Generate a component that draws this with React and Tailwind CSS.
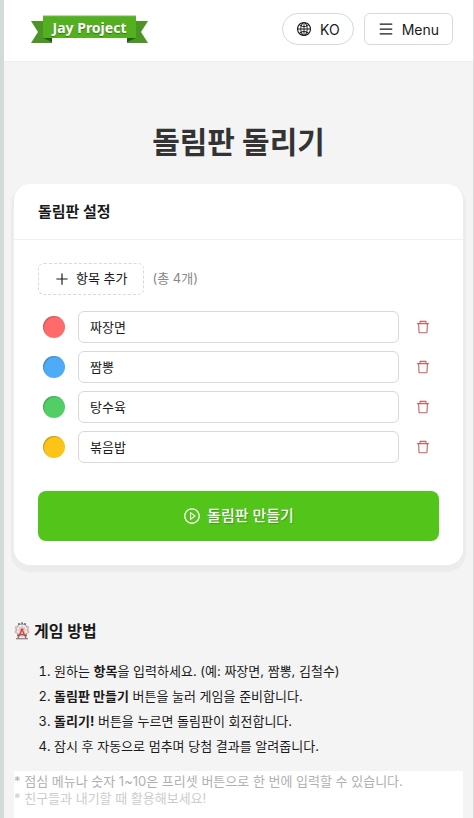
import React, { useState } from "react";
import { AiOutlineDelete, AiOutlineGlobal, AiOutlineMenu, AiOutlinePlayCircle, AiOutlinePlus } from "react-icons/ai";

const INITIAL_ITEMS = [
  { id: 1, name: "짜장면", color: "#ff6b6b" },
  { id: 2, name: "짬뽕", color: "#4dabf7" },
  { id: 3, name: "탕수육", color: "#51cf66" },
  { id: 4, name: "볶음밥", color: "#fcc419" },
];

const NEW_COLORS = ["#845ef7", "#ff922b", "#20c997", "#f06595"];

const Logo = () => (
  <svg width="118" height="29" viewBox="0 0 118 29" role="img" aria-label="Jay Project">
    <path d="M0 6H21V28H0L7 17Z" fill="#4c9425" />
    <path d="M117 6H96V28H117L110 17Z" fill="#4c9425" />
    <path d="M12 23H21V27Z" fill="#1f5d10" />
    <path d="M105 23H96V27Z" fill="#1f5d10" />
    <rect x="12" y="1" width="93" height="22" fill="#54b020" />
    <path d="M12 1H105" stroke="#74bd4c" strokeWidth="1" />
    <text
      x="58.5"
      y="18"
      textAnchor="middle"
      fill="#ffffff"
      className="font-['Noto_Sans'] text-[14px] font-bold [text-shadow:0_1px_1px_rgba(0,0,0,0.35)]"
    >
      Jay Project
    </text>
  </svg>
);

const FerrisWheel = () => (
  <svg width="16" height="18" viewBox="0 0 16 18" fill="none" aria-hidden="true">
    <circle cx="8" cy="8" r="6" stroke="#8d9296" strokeWidth="1" />
    <circle cx="8" cy="8" r="3.2" stroke="#e3a9a9" strokeWidth="0.7" />
    <path d="M8 2V14M2 8H14M3.8 3.8L12.2 12.2M12.2 3.8L3.8 12.2" stroke="#c3b1b3" strokeWidth="0.6" />
    <g fill="#e9b4b4">
      <circle cx="2.2" cy="5.4" r="1.4" />
      <circle cx="13.8" cy="5.4" r="1.4" />
      <circle cx="1.9" cy="10" r="1.4" />
      <circle cx="14.1" cy="10" r="1.4" />
    </g>
    <g fill="#6d7378">
      <circle cx="5" cy="2" r="1.1" />
      <circle cx="11" cy="2" r="1.1" />
      <circle cx="8" cy="1.3" r="1" />
      <circle cx="4" cy="13.4" r="1.1" />
      <circle cx="12" cy="13.4" r="1.1" />
    </g>
    <path d="M8 7.5L4 16M8 7.5L12 16M5.8 12.4H10.2" stroke="#d4413f" strokeWidth="1.3" />
    <circle cx="8" cy="7.8" r="1.5" fill="#d4413f" />
    <path d="M2 16.7H14" stroke="#777c80" strokeWidth="1.2" />
  </svg>
);

const Header = () => (
  <header className="flex items-start justify-between border-b border-[#eeeeee] bg-white pt-[13px] pr-5 pb-4 pl-[27px]">
    <a href="#home" className="pt-[2px]">
      <Logo />
    </a>
    <div className="flex gap-[10px]">
      <button type="button" className="flex h-8 items-center gap-2 rounded-full border border-[#d9d9d9] px-[13px] text-[14px]">
        <AiOutlineGlobal size={16} />
        KO
      </button>
      <button type="button" className="flex h-8 items-center gap-2 rounded-md border border-[#d9d9d9] px-[13px] text-[14px]">
        <AiOutlineMenu size={16} />
        Menu
      </button>
    </div>
  </header>
);

const ItemRow = ({ item, onChange, onRemove }) => (
  <li className="flex items-center gap-2">
    <div className="flex w-8 shrink-0 justify-center">
      <span
        className="size-[22px] rounded-full shadow-[inset_1px_1px_1px_rgba(0,0,0,0.2)]"
        style={{ backgroundColor: item.color }}
      />
    </div>
    <input
      type="text"
      aria-label="항목 이름"
      value={item.name}
      onChange={(e) => onChange(item.id, e.target.value)}
      className="h-8 min-w-0 flex-1 rounded-md border border-[#d9d9d9] px-[11px] pb-[2px] text-[13px] outline-none focus:border-[#52c41a]"
    />
    <button
      type="button"
      aria-label="항목 삭제"
      onClick={() => onRemove(item.id)}
      className="flex size-8 shrink-0 items-center justify-center text-[#cf6060]"
    >
      <AiOutlineDelete size={16} />
    </button>
  </li>
);

const RouletteSettings = () => {
  const [items, setItems] = useState(INITIAL_ITEMS);

  const handleAdd = () => {
    setItems((prev) => [...prev, { id: Date.now(), name: "", color: NEW_COLORS[prev.length % NEW_COLORS.length] }]);
  };

  const handleChange = (id, name) => {
    setItems((prev) => prev.map((item) => (item.id === id ? { ...item, name } : item)));
  };

  const handleRemove = (id) => {
    setItems((prev) => prev.filter((item) => item.id !== id));
  };

  return (
    <section className="rounded-2xl bg-white shadow-[0_4px_1px_3px_#ececec]">
      <h2 className="border-b border-[#f0f0f0] px-6 py-4 text-[15px] leading-[23px] font-bold">돌림판 설정</h2>
      <div className="px-6 pt-[23px] pb-6">
        <div className="flex items-center gap-[9px]">
          <button
            type="button"
            onClick={handleAdd}
            className="flex h-8 items-center gap-[6px] rounded-md border border-dashed border-[#d9d9d9] px-[15px] text-[13px]"
          >
            <AiOutlinePlus size={16} />
            항목 추가
          </button>
          <span className="text-[13px] text-[#888888]">(총 {items.length}개)</span>
        </div>
        <ul className="mt-4 flex flex-col gap-2">
          {items.map((item) => (
            <ItemRow key={item.id} item={item} onChange={handleChange} onRemove={handleRemove} />
          ))}
        </ul>
        <button
          type="button"
          className="mt-7 flex h-[50px] w-full items-center justify-center gap-[6px] rounded-lg bg-[#52c41a] text-[15px] font-medium text-white [text-shadow:1px_1px_1px_rgba(0,0,0,0.2)]"
        >
          <AiOutlinePlayCircle size={18} />
          돌림판 만들기
        </button>
      </div>
    </section>
  );
};

const HowToPlay = () => (
  <section className="mt-[54px]">
    <h3 className="flex items-center gap-1 text-[16px] leading-6 font-bold">
      <FerrisWheel />
      게임 방법
    </h3>
    <ol className="mt-4 list-decimal pl-10 text-[13px] leading-[25px]">
      <li>
        원하는 <strong>항목</strong>을 입력하세요. (예: 짜장면, 짬뽕, 김철수)
      </li>
      <li>
        <strong>돌림판 만들기</strong> 버튼을 눌러 게임을 준비합니다.
      </li>
      <li>
        <strong>돌리기!</strong> 버튼을 누르면 돌림판이 회전합니다.
      </li>
      <li>잠시 후 자동으로 멈추며 당첨 결과를 알려줍니다.</li>
    </ol>
    <div className="mt-3 h-16 bg-white pt-[2px] text-[13px] leading-[17px]">
      <p className="text-[#b0b0b0]">* 점심 메뉴나 숫자 1~10은 프리셋 버튼으로 한 번에 입력할 수 있습니다.</p>
      <p className="text-[#cccccc]">* 친구들과 내기할 때 활용해보세요!</p>
    </div>
  </section>
);

const App = () => (
  <div className="h-screen overflow-hidden border-r border-l-4 border-r-[#dddddd] border-l-[#d3dbda] bg-[#f4f4f4] font-['Inter','Noto_Sans_CJK_KR',sans-serif] text-[#1a1a1a]">
    <Header />
    <main className="px-[10px] pt-[58px]">
      <h1 className="mb-5 text-center text-[30px] leading-[44px] font-bold text-[#333333]">돌림판 돌리기</h1>
      <RouletteSettings />
      <HowToPlay />
    </main>
  </div>
);

export default App;
